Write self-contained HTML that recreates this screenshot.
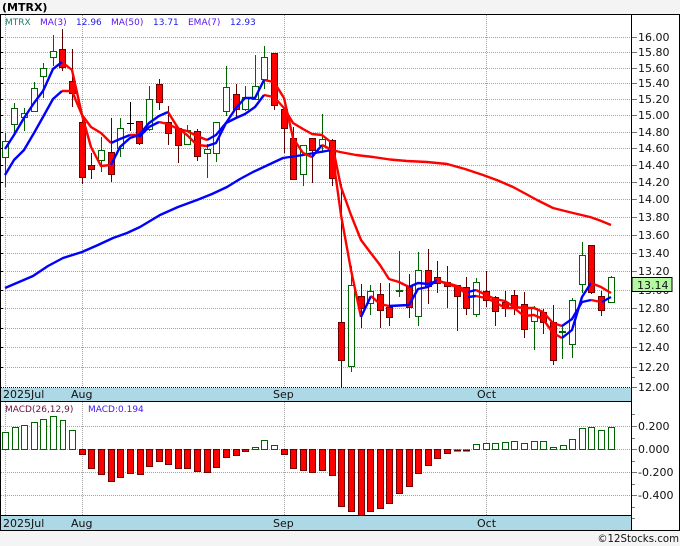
<!DOCTYPE html>
<html><head><meta charset="utf-8"><style>
html,body{margin:0;padding:0;background:#f4f4f4}
svg{display:block;position:absolute;left:0;top:0}
text{font-family:"DejaVu Sans","Liberation Sans",sans-serif}
</style></head><body>
<svg width="680" height="546" viewBox="0 0 680 546" xmlns="http://www.w3.org/2000/svg">
<rect width="680" height="546" fill="#f4f4f4"/>
<rect x="0" y="14" width="680" height="517" fill="#fff"/>
<rect x="1" y="388" width="631" height="13" fill="#add8e6"/>
<rect x="1" y="516" width="631" height="14" fill="#add8e6"/>
<!-- grid -->
<g stroke="#a3a3a3" stroke-width="1" stroke-dasharray="1 1" fill="none" shape-rendering="crispEdges">
<path d="M1 37.5H632M1 52.5H632M1 68.5H632M1 83.5H632M1 99.5H632M1 115.5H632M1 132.5H632M1 148.5H632M1 165.5H632M1 182.5H632M1 199.5H632M1 217.5H632M1 235.5H632M1 253.5H632M1 271.5H632M1 290.5H632M1 308.5H632M1 328.5H632M1 347.5H632M1 367.5H632"/>
<path d="M5.5 15V388M82.5 15V388M284.5 15V388M486.5 15V388"/>
<path d="M1 426.5H632M1 449.5H632M1 472.5H632M1 495.5H632"/>
<path d="M5.5 402V516M82.5 402V516M284.5 402V516M486.5 402V516"/>
</g>
<path d="M1 387.5H632" stroke="#000" stroke-dasharray="1 1" shape-rendering="crispEdges"/>
<!-- candles wicks -->
<g fill="none" stroke-width="1" shape-rendering="crispEdges">
<path stroke="#006400" d="M5.5 133V187M14.5 103V133M24.5 108V131M34.5 82V112M43.5 63V98M53.5 35V66M101.5 137V172M120.5 118V157M149.5 86V131M187.5 125V145M207.5 144V178M216.5 122V162M226.5 66V116M245.5 86V111M255.5 55V99M264.5 46V89M303.5 145V186M322.5 114V153M351.5 266V372M370.5 285V315M399.5 251V297M418.5 252V326M476.5 278V317M534.5 306V350M562.5 325V359M572.5 298V358M582.5 242V293M611.5 276V302"/>
<path stroke="#5c0000" d="M62.5 29V71M72.5 49V107M82.5 118V184M91.5 153V179M111.5 118V182M139.5 121V145M159.5 79V110M168.5 106V145M178.5 128V163M197.5 129V161M236.5 84V117M274.5 53V110M284.5 109V153M293.5 127V180M312.5 138V183M332.5 139V186M341.5 184V387M361.5 284V328M380.5 283V328M389.5 283V326M409.5 274V318M428.5 249V304M437.5 261V293M447.5 266V308M457.5 285V331M466.5 277V315M486.5 271V307M495.5 296V326M505.5 291V317M514.5 290V315M524.5 292V338M543.5 309V334M553.5 305V365M591.5 245V294M601.5 291V316"/>
<path stroke="#000" d="M130.5 102V131M127 123.5H134"/>
<path stroke="#006400" stroke-width="2" d="M396 291H403M559 332H566"/>
</g>
<!-- candle bodies -->
<g shape-rendering="crispEdges" stroke-width="1">
<path fill="#fff" stroke="#006400" d="M2.5 141.5h6v16h-6zM11.5 108.5h6v16h-6zM21.5 113.5h6v4h-6zM31.5 88.5h6v23h-6zM40.5 68.5h6v8h-6zM50.5 51.5h6v6h-6zM98.5 150.5h6v10h-6zM117.5 128.5h6v20h-6zM146.5 99.5h6v30h-6zM184.5 130.5h6v14h-6zM204.5 149.5h6v4h-6zM213.5 122.5h6v31h-6zM223.5 87.5h6v24h-6zM242.5 97.5h6v12h-6zM252.5 86.5h6v13h-6zM261.5 57.5h6v22h-6zM300.5 145.5h6v29h-6zM319.5 139.5h6v6h-6zM348.5 285.5h6v81h-6zM367.5 291.5h6v12h-6zM415.5 270.5h6v46h-6zM473.5 282.5h6v32h-6zM531.5 308.5h6v13h-6zM569.5 300.5h6v44h-6zM579.5 255.5h6v29h-6zM608.5 277.5h6v25h-6z"/>
<path fill="#f00" stroke="#6e0000" d="M59.5 49.5h6v18h-6zM69.5 81.5h6v12h-6zM79.5 122.5h6v55h-6zM88.5 165.5h6v4h-6zM108.5 152.5h6v22h-6zM136.5 121.5h6v22h-6zM156.5 84.5h6v18h-6zM165.5 122.5h6v11h-6zM175.5 128.5h6v17h-6zM194.5 131.5h6v25h-6zM233.5 94.5h6v15h-6zM271.5 53.5h6v52h-6zM281.5 109.5h6v19h-6zM290.5 138.5h6v41h-6zM309.5 138.5h6v12h-6zM329.5 140.5h6v38h-6zM338.5 322.5h6v38h-6zM358.5 296.5h6v12h-6zM377.5 294.5h6v16h-6zM386.5 307.5h6v10h-6zM406.5 286.5h6v21h-6zM425.5 270.5h6v16h-6zM434.5 277.5h6v6h-6zM444.5 282.5h6v4h-6zM454.5 285.5h6v11h-6zM463.5 287.5h6v21h-6zM483.5 291.5h6v9h-6zM492.5 297.5h6v14h-6zM502.5 302.5h6v6h-6zM511.5 295.5h6v13h-6zM521.5 304.5h6v25h-6zM540.5 312.5h6v10h-6zM550.5 322.5h6v38h-6zM588.5 245.5h6v47h-6zM598.5 296.5h6v14h-6z"/>
</g>
<!-- moving averages -->
<g fill="none" stroke-width="2.4" stroke-linejoin="round">
<path stroke="#00f" d="M5 288L19 282L33 276L48 266L63 258L82 252L98 245L113 238L127 233L140 227L150 221L160 215L178 207L197 200L212 194L227 187L240 179L253 172L268 165L283 158L303 155L332 150"/>
<path stroke="#f00" d="M332 150L340 152L356 155L373 157L390 159.5L407 161L427 162L447 164L465 169L483 175L498 180.5L513 187L526 194L537 200L553 208L573 213L590 217L600 220.5L611 225"/>
<path stroke="#f00" d="M62 62L72 70L82 115L91 147L101 166L111 165"/>
<path stroke="#f00" d="M62 91L72 91L82 115L91 127L101 133L111 143"/>
<path stroke="#f00" d="M130 135L139 135M159 122L168 124L178 129L187 131L197 136L207 140"/>
<path stroke="#f00" d="M168 112L178 128L187 135L197 145L207 146"/>
<path stroke="#f00" d="M264 80L274 82L284 98L293 138L303 153L312 157"/>
<path stroke="#f00" d="M264 95L274 97L284 108L293 123L303 129L312 134L322 135L332 143L341 187L351 215L361 240L370 252L380 265L389 279L399 282L409 287"/>
<path stroke="#00f" d="M5 149L14 135L24 118L34 103L43 91L53 69L62 62"/>
<path stroke="#00f" d="M5 175L14 160L24 150L34 133L43 117L53 99L62 91"/>
<path stroke="#00f" d="M111 165L120 147L130 138L139 135L149 123L159 116L168 112"/>
<path stroke="#00f" d="M111 143L120 139L130 135M139 137L149 127L159 122"/>
<path stroke="#00f" d="M207 140L216 135L226 123L236 118L245 114L255 107L264 95"/>
<path stroke="#00f" d="M207 146L216 143L226 123L236 108L245 98L255 98L264 80"/>
<path stroke="#00f" d="M312 157L322 145"/>
<path stroke="#f00" d="M322 145L332 150L341 215L351 270L361 317"/>
<path stroke="#00f" d="M361 317L371 296"/>
<path stroke="#f00" d="M371 296L380 304L389 306"/>
<path stroke="#00f" d="M389 306L409 305L418 289L428 287L437 280"/>
<path stroke="#00f" d="M409 287L418 283L428 284L437 281"/>
<path stroke="#00f" d="M468 297L476 296M468 292L476 290"/>
<path stroke="#f00" d="M437 280L447 284L457 287L468 295M476 296L486 298L495 302L505 308L514 308L524 316L534 315L543 319L553 333L562 338"/>
<path stroke="#f00" d="M437 281L447 283L457 286L468 291M476 290L486 295L495 299L505 301L514 307L524 308L534 308L543 312L553 323L562 326"/>
<path stroke="#00f" d="M562 338L572 330L582 297L591 283"/>
<path stroke="#00f" d="M562 326L572 319L582 302L591 300"/>
<path stroke="#f00" d="M591 283L601 287L611 293M591 300L601 302"/>
<path stroke="#00f" d="M602 302L611 297"/>
</g>
<!-- MACD bars -->
<g shape-rendering="crispEdges" stroke-width="1">
<path fill="#fff" stroke="#006400" d="M2.5 432.5h6V449.5h-6zM12.5 427.5h6V449.5h-6zM21.5 425.5h6V449.5h-6zM31.5 422.5h6V449.5h-6zM40.5 419.5h6V449.5h-6zM50.5 416.5h6V449.5h-6zM60.5 420.5h5V449.5h-5zM69.5 430.5h6V449.5h-6zM252.5 447.5h6V449.5h-6zM261.5 440.5h6V449.5h-6zM271.5 445.5h6V449.5h-6zM473.5 444.5h6V449.5h-6zM483.5 443.5h6V449.5h-6zM492.5 443.5h6V449.5h-6zM502.5 442.5h6V449.5h-6zM511.5 441.5h6V449.5h-6zM521.5 443.5h6V449.5h-6zM531.5 441.5h6V449.5h-6zM540.5 441.5h6V449.5h-6zM550.5 447.5h6V449.5h-6zM560.5 445.5h6V449.5h-6zM569.5 439.5h6V449.5h-6zM579.5 428.5h6V449.5h-6zM588.5 427.5h6V449.5h-6zM598.5 430.5h6V449.5h-6zM608.5 427.5h6V449.5h-6z"/>
<path fill="#f00" stroke="#6e0000" d="M79.5 449.5h6V454.5h-6zM88.5 449.5h6V468.5h-6zM98.5 449.5h6V474.5h-6zM108.5 449.5h6V481.5h-6zM117.5 449.5h6V477.5h-6zM127.5 449.5h6V473.5h-6zM137.5 449.5h6V474.5h-6zM146.5 449.5h6V466.5h-6zM156.5 449.5h6V461.5h-6zM165.5 449.5h6V464.5h-6zM175.5 449.5h6V468.5h-6zM184.5 449.5h6V468.5h-6zM194.5 449.5h6V471.5h-6zM204.5 449.5h6V472.5h-6zM213.5 449.5h6V467.5h-6zM223.5 449.5h6V457.5h-6zM233.5 449.5h6V455.5h-6zM242.5 449.5h6V451.5h-6zM281.5 449.5h6V454.5h-6zM290.5 449.5h6V468.5h-6zM300.5 449.5h6V470.5h-6zM309.5 449.5h6V472.5h-6zM319.5 449.5h6V470.5h-6zM329.5 449.5h6V475.5h-6zM338.5 449.5h6V506.5h-6zM348.5 449.5h6V511.5h-6zM358.5 449.5h6V515.5h-6zM367.5 449.5h6V511.5h-6zM377.5 449.5h6V508.5h-6zM386.5 449.5h6V503.5h-6zM396.5 449.5h6V493.5h-6zM406.5 449.5h6V486.5h-6zM415.5 449.5h6V473.5h-6zM425.5 449.5h6V465.5h-6zM434.5 449.5h6V458.5h-6zM444.5 449.5h6V453.5h-6z"/>
<path stroke="#5c0000" stroke-width="2" d="M454 450.5H461M463 450.5H470"/>
</g>
<!-- frame -->
<g stroke="#000" stroke-width="1" fill="none" shape-rendering="crispEdges">
<path d="M0 14.5H680M0.5 14V531M0 401.5H632M0 515.5H632M0 530.5H680M631.5 14V531M679.5 14V531"/>
<path d="M0 37.5H3M0 52.5H3M0 68.5H3M0 83.5H3M0 99.5H3M0 115.5H3M0 132.5H3M0 148.5H3M0 165.5H3M0 182.5H3M0 199.5H3M0 217.5H3M0 235.5H3M0 253.5H3M0 271.5H3M0 290.5H3M0 308.5H3M0 328.5H3M0 347.5H3M0 367.5H3"/>
</g>
<g stroke="#777" stroke-width="1" fill="none" shape-rendering="crispEdges">
<path d="M632 37.5H637M632 52.5H637M632 68.5H637M632 83.5H637M632 99.5H637M632 115.5H637M632 132.5H637M632 148.5H637M632 165.5H637M632 182.5H637M632 199.5H637M632 217.5H637M632 235.5H637M632 253.5H637M632 271.5H637M632 290.5H637M632 308.5H637M632 328.5H637M632 347.5H637M632 367.5H637M632 377.5H635M632 387.5H637"/>
<path d="M632 414.5H635M632 426.5H637M632 438.5H635M632 449.5H637M632 461.5H635M632 472.5H637M632 484.5H635M632 495.5H637M632 507.5H635M632 518.5H635"/>
</g>
<!-- texts -->
<text x="2" y="11" font-size="11" font-weight="bold" fill="#000">(MTRX)</text>
<g font-size="9">
<text x="5" y="25" fill="#1d7d6d">MTRX</text>
<text x="40" y="25" fill="#5a14f0">MA(3)</text>
<text x="76" y="25" fill="#1a1aee">12.96</text>
<text x="111" y="25" fill="#5a14f0">MA(50)</text>
<text x="153" y="25" fill="#1a1aee">13.71</text>
<text x="188" y="25" fill="#5a14f0">EMA(7)</text>
<text x="230" y="25" fill="#1a1aee">12.93</text>
<text x="5" y="412" fill="#6a1040">MACD(26,12,9)</text>
<text x="88" y="412" fill="#3a18f0">MACD:0.194</text>
</g>
<g font-size="11" fill="#111">
<text x="638" y="41">16.00</text>
<text x="638" y="56">15.80</text>
<text x="638" y="72">15.60</text>
<text x="638" y="87">15.40</text>
<text x="638" y="103">15.20</text>
<text x="638" y="119">15.00</text>
<text x="638" y="136">14.80</text>
<text x="638" y="152">14.60</text>
<text x="638" y="169">14.40</text>
<text x="638" y="186">14.20</text>
<text x="638" y="203">14.00</text>
<text x="638" y="221">13.80</text>
<text x="638" y="239">13.60</text>
<text x="638" y="257">13.40</text>
<text x="638" y="275">13.20</text>
<text x="638" y="294">13.00</text>
<text x="638" y="312">12.80</text>
<text x="638" y="332">12.60</text>
<text x="638" y="351">12.40</text>
<text x="638" y="371">12.20</text>
<text x="638" y="391">12.00</text>
<text x="638" y="430">0.200</text>
<text x="638" y="453">0.000</text>
<text x="638" y="476">-0.200</text>
<text x="638" y="499">-0.400</text>
<text x="3" y="398">2025Jul</text>
<text x="71" y="398">Aug</text>
<text x="273" y="398">Sep</text>
<text x="477" y="398">Oct</text>
<text x="3" y="527">2025Jul</text>
<text x="71" y="527">Aug</text>
<text x="273" y="527">Sep</text>
<text x="477" y="527">Oct</text>
</g>
<rect x="632" y="277.5" width="40" height="14" fill="#b4f8a4" stroke="#000" shape-rendering="crispEdges"/>
<text x="637" y="289" font-size="11" fill="#111">13.14</text>
<text x="679" y="542" font-size="10.2" fill="#111" text-anchor="end">©12Stocks.com</text>
</svg>
</body></html>
